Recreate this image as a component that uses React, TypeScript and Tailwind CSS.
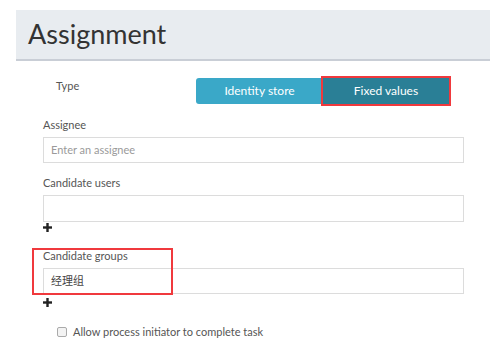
import React from "react";

function PlusIcon() {
  return (
    <svg width="9" height="9" viewBox="0 0 9 9" className="block">
      <rect x="3.3" y="0" width="2.4" height="9" fill="#222" />
      <rect x="0" y="3.3" width="9" height="2.4" fill="#222" />
    </svg>
  );
}

function Field({ label, value, placeholder, labelTop, inputTop, h }: { label: string; value?: string; placeholder?: string; labelTop: string; inputTop: string; h: string }) {
  return (
    <div>
      <p className={`${labelTop} text-[11px] leading-[14px] text-[#555]`}>{label}</p>
      <div className={`${inputTop} ${h} w-[421px] border border-[#dcdcdc] bg-white flex items-center px-[7px] text-[11px]`}>
        {value ? <span className="text-[#444]">{value}</span> : <span className="text-[#9a9a9a]">{placeholder}</span>}
      </div>
    </div>
  );
}

export default function App() {
  return (
    <div className="relative w-[500px] h-[355px] bg-white overflow-hidden" style={{ fontFamily: "Lato, 'Noto Sans CJK SC', sans-serif" }}>
      {/* header */}
      <div className="ml-4 mt-[10px] w-[474px] h-[51px] bg-[#e8ecf0] border-b-2 border-[#c9ced6]">
        <h1 className="pl-3 text-[27px] leading-[48px] text-[#333]">Assignment</h1>
      </div>

      {/* type selector */}
      <div className="flex mt-[17px]">
        <p className="ml-[56px] w-[22px] mt-[1px] text-[11px] leading-[14px] text-[#555]">Type</p>
        <div className="ml-[118px] flex">
          <button className="w-[127px] h-[26px] rounded-l-[3px] bg-[#3aa8c8] text-white text-[12px]">Identity store</button>
          <button className="w-[126px] h-[26px] bg-[#2a7f96] text-white text-[12px] outline-2 outline-[#f0393d]">Fixed values</button>
        </div>
      </div>

      <div className="ml-[43px]">
        <Field label="Assignee" placeholder="Enter an assignee" labelTop="mt-[14px]" inputTop="mt-[5px]" h="h-[26px]" />
        <Field label="Candidate users" labelTop="mt-[13px]" inputTop="mt-[5px]" h="h-[27px]" />
        <div className="mt-[1px]"><PlusIcon /></div>
        <Field label="Candidate groups" value="经理组" labelTop="mt-[17px]" inputTop="mt-[5px]" h="h-[26px]" />
        <div className="mt-[4px]"><PlusIcon /></div>
        <label className="ml-[14px] mt-[17px] flex items-center gap-[6px] text-[11px] text-[#555]">
          <span className="w-[10px] h-[10px] rounded-[2px] border border-[#aaa] bg-[#f3f3f3]" />
          Allow process initiator to complete task
        </label>
      </div>

      {/* annotation box */}
      <div className="absolute left-[32px] top-[248px] w-[141px] h-[47px] border-2 border-[#f0393d]" />
    </div>
  );
}
